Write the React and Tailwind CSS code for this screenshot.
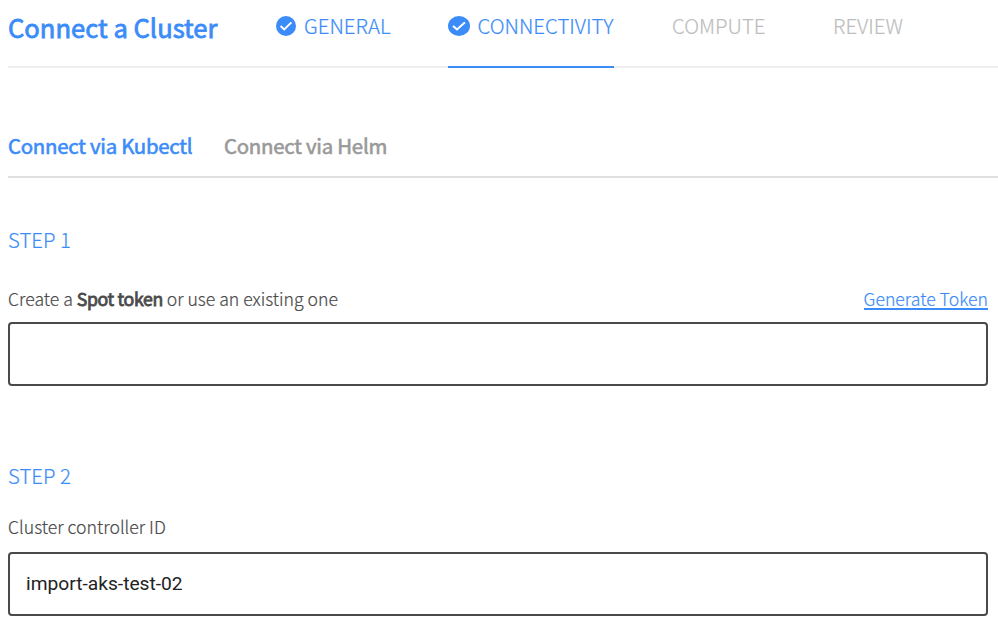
function CheckBadge({ className }) {
  return (
    <svg viewBox="0 0 20 20" className={className} preserveAspectRatio="none">
      <circle cx="10" cy="10" r="10" fill="#3b8cf8" />
      <path d="M4.6 10l3.6 3.5 7.2-7.2" fill="none" stroke="#fff" strokeWidth="1.9" />
    </svg>
  );
}

function Field({ children }) {
  return (
    <div className="flex h-16 items-center rounded-[4px] border-2 border-[#4a4a4a] px-4 font-['Roboto',sans-serif] text-[19.2px] font-normal text-[#222] [-webkit-text-stroke:0px]">
      {children}
    </div>
  );
}

export default function App() {
  return (
    <main className="h-[626px] w-[998px] overflow-hidden bg-white pl-2 font-['Noto_Sans_CJK_SC',sans-serif] font-light whitespace-nowrap text-[#4a4a4a] [-webkit-text-stroke:0.2px]">
      <header className="flex h-[68px] border-b-2 border-[#eee] text-[20.4px] leading-[50px] text-[#3b8cf8]">
        <h1 className="w-[268px] text-[25.6px] leading-[54px] font-normal [-webkit-text-stroke:0.8px]">Connect a Cluster</h1>
        <nav className="flex h-[68px]">
          <div className="flex w-[172px]">
            <CheckBadge className="mt-4 mr-2 size-5" />
            <span>GENERAL</span>
          </div>
          <div className="mr-[58px] flex w-[166px] border-b-2 border-[#3b8cf8]">
            <CheckBadge className="mt-4 mr-[7.5px] h-5 w-[22px]" />
            <span>CONNECTIVITY</span>
          </div>
          <span className="w-[161px] text-[#bdbdbd]">COMPUTE</span>
          <span className="text-[#bdbdbd]">REVIEW</span>
        </nav>
      </header>

      <div className="mt-[60px] flex h-[50px] gap-8 border-b-2 border-[#e0e0e0] text-[20.4px] leading-[34px] font-normal tracking-[-0.25px] [-webkit-text-stroke:0.6px]">
        <span className="w-[184px] text-[#3b8cf8]">Connect via Kubectl</span>
        <span className="text-[#999]">Connect via Helm</span>
      </div>

      <section className="mt-[46px] pr-[10px]">
        <h2 className="text-[20.4px] leading-[30px] text-[#3b8cf8]">STEP 1</h2>
        <div className="mt-8 flex h-9 justify-between text-[17.65px] leading-[26px]">
          <span>
            Create a <b className="font-normal tracking-[-0.33px] [-webkit-text-stroke:0.8px]">Spot token</b> or use an existing one
          </span>
          <a className="h-[24px] border-b-2 border-[#3b8cf8] text-[#3b8cf8]">Generate Token</a>
        </div>
        <Field />
      </section>

      <section className="mt-[74px] pr-[10px]">
        <h2 className="text-[20.4px] leading-[30px] text-[#3b8cf8]">STEP 2</h2>
        <div className="mt-6 h-[38px] text-[17.7px] leading-[24px]">Cluster controller ID</div>
        <Field>import-aks-test-02</Field>
      </section>
    </main>
  );
}
